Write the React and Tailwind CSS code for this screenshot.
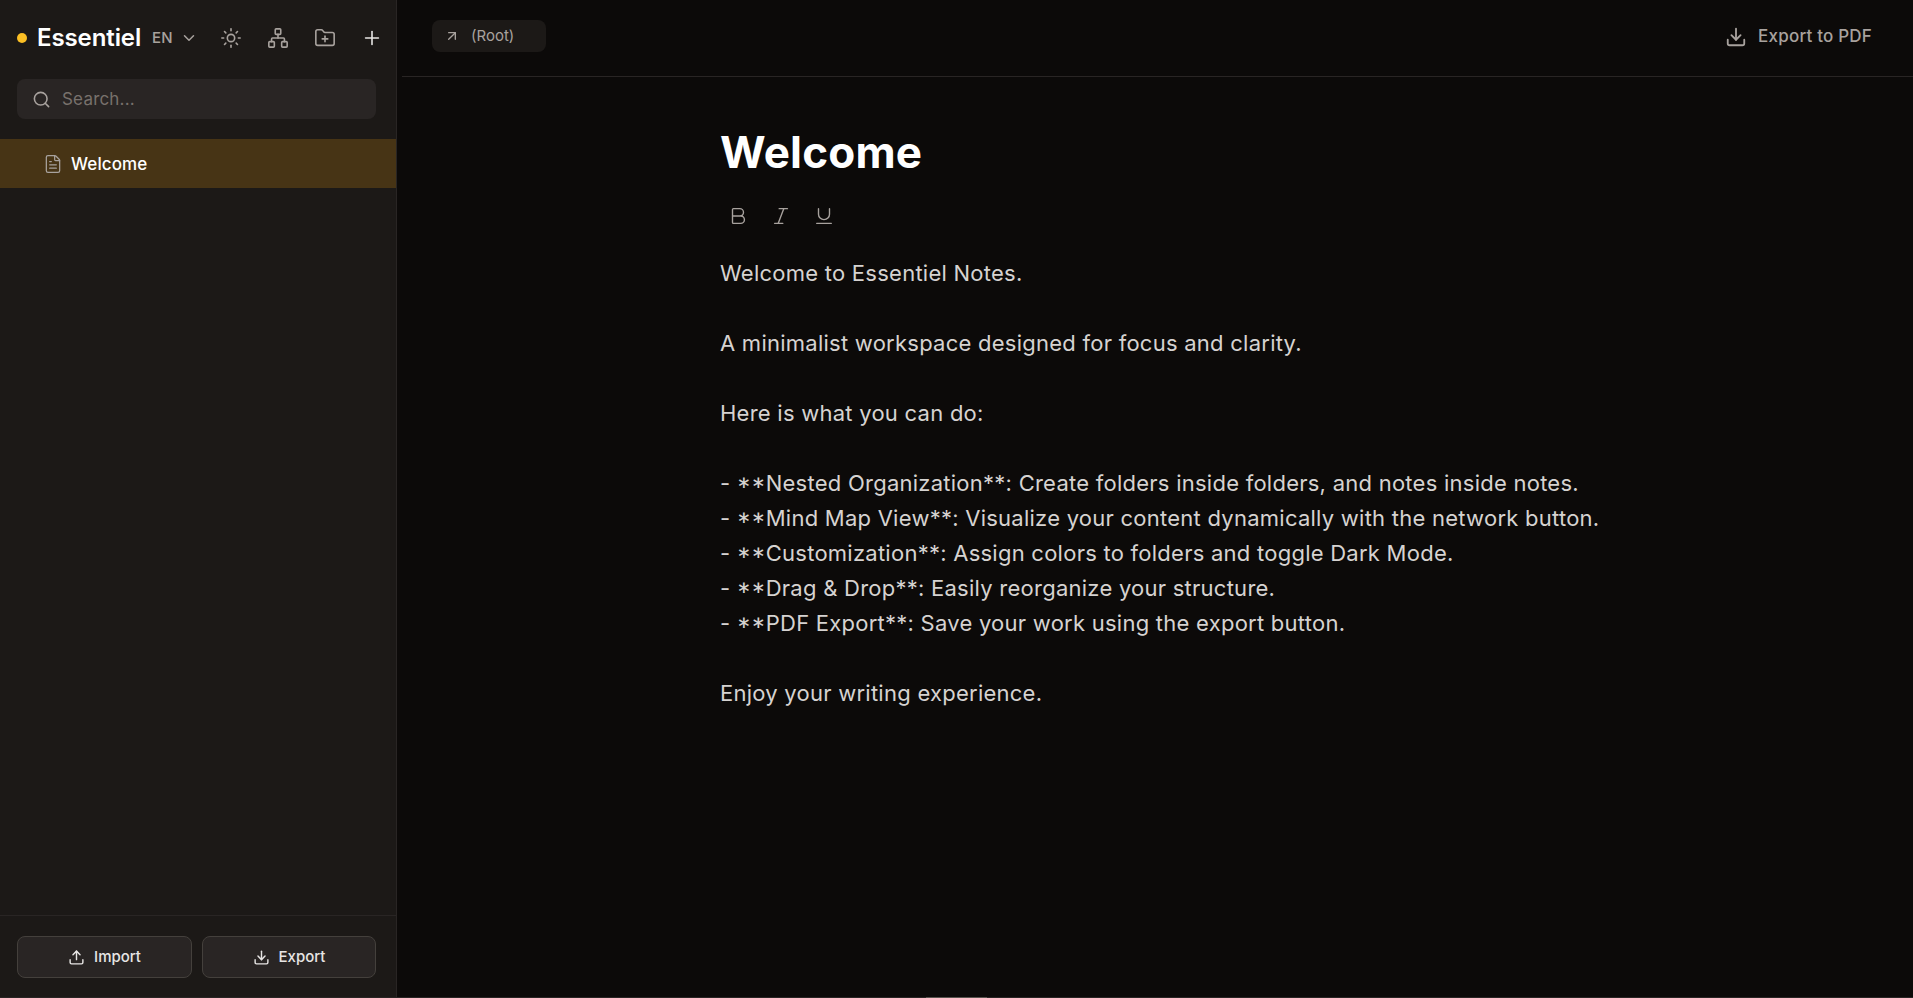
import { ArrowUpRight, Bold, ChevronDown, Download, FileText, FolderPlus, Italic, Network, Plus, Search, Sun, Underline, Upload } from "lucide-react";

const noteLines = [
  "Welcome to Essentiel Notes.",
  "",
  "A minimalist workspace designed for focus and clarity.",
  "",
  "Here is what you can do:",
  "",
  ["Nested Organization**: Create folders inside folders, and notes inside notes."],
  ["Mind Map View**: Visualize your content dynamically with the network button."],
  ["Customization**: Assign colors to folders and toggle Dark Mode."],
  ["Drag & Drop**: Easily reorganize your structure."],
  ["PDF Export**: Save your work using the export button."],
  "",
  "Enjoy your writing experience.",
];

function Sidebar() {
  return (
    <aside className="flex h-full w-[397px] shrink-0 flex-col border-r border-[#292524] bg-[#1c1917]">
      <div className="flex h-[79px] shrink-0 items-center pb-[3px] pl-[17px] pr-[13px]">
        <span className="h-[10px] w-[10px] rounded-full bg-[#fbbf24]" />
        <span className="ml-[10px] text-[24px] font-semibold tracking-[-0.1px] text-white">Essentiel</span>
        <button className="ml-[11px] flex items-center gap-[7px] text-[15px] font-medium text-[#a8a29e]">
          EN
          <ChevronDown size={18} />
        </button>
        <div className="ml-auto flex items-center gap-[25px] text-[#a8a29e]">
          <Sun size={22} strokeWidth={1.75} />
          <Network size={22} strokeWidth={1.75} />
          <FolderPlus size={22} strokeWidth={1.75} />
          <Plus size={22} strokeWidth={1.75} className="text-[#e7e5e4]" />
        </div>
      </div>
      <div className="px-[17px]">
        <div className="flex h-[40px] w-[359px] items-center gap-[11px] rounded-lg bg-[#292524] px-[15px] text-[#a8a29e]">
          <Search size={19} />
          <span className="pt-[2px] text-[17px] tracking-[0.2px] text-[#78716c]">Search...</span>
        </div>
      </div>
      <div className="mt-[20px] flex h-[49px] items-center gap-[8px] bg-[#473415] pl-[43px]">
        <FileText size={20} strokeWidth={1.5} className="text-[#a8a29e]" />
        <span className="pt-[2px] text-[17px] font-medium tracking-[0.1px] text-white">Welcome</span>
      </div>
      <div className="mt-auto flex h-[82px] gap-[10px] border-t border-[#292524] px-[17px] pt-[20px]">
        <button className="flex h-[42px] w-[175px] items-center justify-center gap-[9px] rounded-lg border border-[#44403c] bg-[#292524] text-[15px] font-medium text-[#e7e5e4]">
          <Upload size={17} />
          Import
        </button>
        <button className="flex h-[42px] w-[174px] items-center justify-center gap-[9px] rounded-lg border border-[#44403c] bg-[#292524] text-[15px] font-medium text-[#e7e5e4]">
          <Download size={17} />
          Export
        </button>
      </div>
    </aside>
  );
}

function NoteLine({ line }) {
  // list items: the opening asterisks sit lower and wider than the closing ones
  if (Array.isArray(line)) {
    return (
      <div className="h-[35px] whitespace-pre">
        - <span className="[font-feature-settings:'case'_1]">**</span>
        {line[0]}
      </div>
    );
  }
  return <div className="h-[35px] whitespace-pre">{line}</div>;
}

function Editor() {
  return (
    <main className="flex h-full min-w-0 flex-1 flex-col bg-[#0c0a09]">
      <header className="ml-[5px] flex h-[77px] shrink-0 items-center justify-between border-b border-[#292524] pb-[4px] pl-[30px] pr-[41px]">
        <div className="flex h-[32px] w-[114px] items-center gap-[11px] rounded-lg bg-[#1c1917] pl-[12px] text-[15px] text-[#a8a29e]">
          <ArrowUpRight size={16} />
          (Root)
        </div>
        <button className="flex items-center gap-[11px] pt-[2px] text-[17px] font-medium tracking-[0.2px] text-[#a8a29e]">
          <Download size={22} />
          Export to PDF
        </button>
      </header>
      <div className="ml-[323px] flex-1 pt-[47px]">
        <h1 className="text-[44px] font-bold leading-[56px] tracking-[0.2px] text-white">Welcome</h1>
        <div className="mt-[20px] flex h-[32px] items-center gap-[21px] pl-[7px] text-[#a8a29e]">
          <Bold size={22} strokeWidth={1.5} />
          <Italic size={22} strokeWidth={1.5} />
          <Underline size={22} strokeWidth={1.5} />
        </div>
        <div className="mt-[24px] text-[22px] leading-[35px] tracking-[0.25px] text-[#d6d3d1]">
          {noteLines.map((line, i) => (
            <NoteLine key={i} line={line} />
          ))}
        </div>
      </div>
    </main>
  );
}

export default function App() {
  return (
    <div className="flex h-[998px] w-full flex-col overflow-hidden font-['Inter',sans-serif]">
      <div className="flex min-h-0 flex-1">
        <Sidebar />
        <Editor />
      </div>
      <div className="flex h-px shrink-0 justify-center bg-[#292524]">
        <div className="h-px w-[61px] bg-[#57534e]" />
      </div>
    </div>
  );
}
